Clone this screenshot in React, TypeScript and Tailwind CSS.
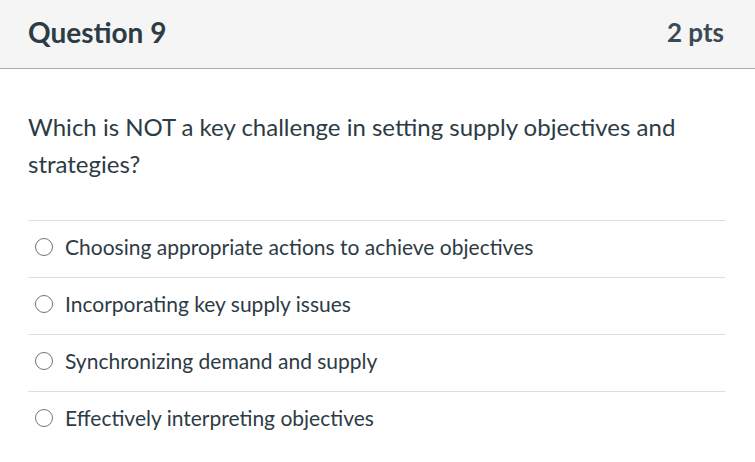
const options = [
  'Choosing appropriate actions to achieve objectives',
  'Incorporating key supply issues',
  'Synchronizing demand and supply',
  'Effectively interpreting objectives',
];

export default function App() {
  return (
    <div className="w-[755px] h-[462px] bg-white text-[#2d3b45] font-['Lato','Liberation_Sans',sans-serif]">
      <div className="h-[69px] bg-[#f5f5f5] border-b border-[#ababab] flex items-center justify-between pl-[28px] pr-[31px] pb-[4px]">
        <h2 className="text-[28px] font-bold text-[#2d3b45]">Question 9</h2>
        <span className="text-[26px] font-bold text-[#3d4a54]">2 pts</span>
      </div>
      <div className="px-[28px] pt-[39px]">
        <p className="text-[24px] leading-[37px] text-[#2d3b45]">
          Which is NOT a key challenge in setting supply objectives and strategies?
        </p>
        <div className="mt-[38px] mr-[2px]">
          {options.map((o) => (
            <label key={o} className="flex items-center h-[57px] border-t border-[#dedede] pl-[7px] gap-[12px] pb-[5px]">
              <span className="w-[18px] h-[18px] rounded-full border-[1.5px] border-[#6b7780] bg-white shrink-0" />
              <span className="text-[21px] text-[#2d3b45]">{o}</span>
            </label>
          ))}
        </div>
      </div>
    </div>
  );
}
